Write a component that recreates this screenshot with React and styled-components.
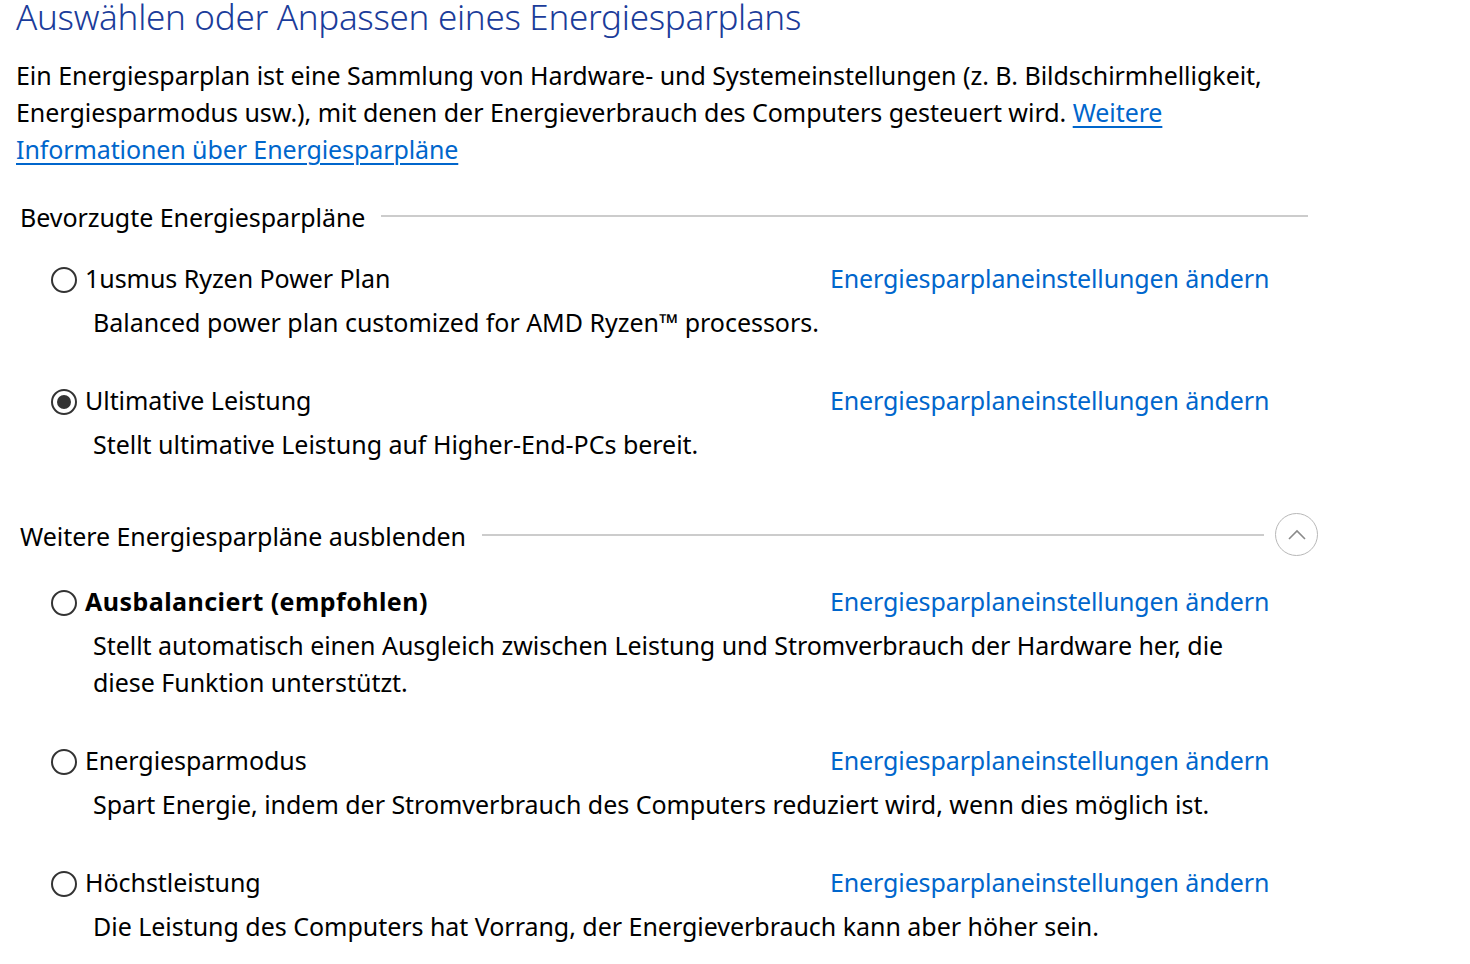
import React from "react";
import styled, { createGlobalStyle } from "styled-components";

const Global = createGlobalStyle`
  html, body { margin: 0; padding: 0; background: #ffffff; }
  body { font-family: "Noto Sans", "Open Sans", sans-serif; color: #000; overflow: hidden; }
`;

const Page = styled.div`
  padding-left: 16px;
  width: 1454px;
  box-sizing: border-box;
`;

const Title = styled.h1`
  margin: 0;
  font-size: 35px;
  line-height: 34px;
  font-weight: 300;
  color: #1b3c9a;
  letter-spacing: -0.3px;
`;

const Intro = styled.p`
  margin: 23px 0 0 0;
  width: 1270px;
  font-size: 25px;
  line-height: 37px;
  letter-spacing: -0.03px;
`;

const Link = styled.a`
  color: #0066cc;
  letter-spacing: ${p => (p.$underline ? "-0.1px" : "-0.12px")};
  text-decoration: ${p => (p.$underline ? "underline" : "none")};
  text-underline-offset: 4px;
  text-decoration-thickness: 1.5px;
  cursor: pointer;
`;

const GroupHeader = styled.div`
  display: flex;
  align-items: center;
  height: 43px;
  width: 1288px;
  margin: ${p => p.$top}px 0 0 4px;
`;

const GroupLabel = styled.span`
  font-size: 25px;
  line-height: 37px;
  letter-spacing: -0.05px;
  padding-top: 4px;
  white-space: nowrap;
`;

const Rule = styled.div`
  flex: 1;
  height: 2px;
  background: #cccccc;
  margin-left: 16px;
`;

const CollapseButton = styled.button`
  flex: none;
  width: 43px;
  height: 43px;
  margin: 0 -10px 0 11px;
  padding: 0;
  border-radius: 50%;
  border: 1px solid #b8b8b8;
  background: #fff;
  display: flex;
  align-items: center;
  justify-content: center;
`;

const PlanList = styled.div`
  display: flex;
  flex-direction: column;
  gap: 41px;
  padding-left: 35px;
  margin-top: ${p => p.$top}px;
`;

const Plan = styled.div`
  display: flex;
  flex-direction: column;
  gap: 7px;
`;

const PlanRow = styled.div`
  display: grid;
  grid-template-columns: 779px auto;
  align-items: center;
  font-size: 25px;
  line-height: 37px;
  letter-spacing: -0.05px;
`;

const RadioLabel = styled.label`
  display: flex;
  align-items: center;
  gap: 8px;
  font-weight: ${p => (p.$bold ? 700 : 400)};
  letter-spacing: ${p => (p.$bold ? "0.45px" : "-0.05px")};
`;

const Radio = styled.span`
  flex: none;
  width: 26px;
  height: 26px;
  box-sizing: border-box;
  border: 2px solid #333333;
  border-radius: 50%;
  display: flex;
  align-items: center;
  justify-content: center;
  margin-top: 2px;
  &::after {
    content: "";
    width: 14px;
    height: 14px;
    border-radius: 50%;
    background: #333333;
    display: ${p => (p.$checked ? "block" : "none")};
  }
`;

const PlanDesc = styled.div`
  padding-left: 42px;
  width: 1190px;
  box-sizing: border-box;
  font-size: 25px;
  line-height: 37px;
  letter-spacing: -0.03px;
`;

const preferred = [
  { name: "1usmus Ryzen Power Plan", desc: "Balanced power plan customized for AMD Ryzen™ processors." },
  { name: "Ultimative Leistung", desc: "Stellt ultimative Leistung auf Higher-End-PCs bereit.", checked: true },
];

const more = [
  { name: "Ausbalanciert (empfohlen)", bold: true, desc: "Stellt automatisch einen Ausgleich zwischen Leistung und Stromverbrauch der Hardware her, die diese Funktion unterstützt." },
  { name: "Energiesparmodus", desc: "Spart Energie, indem der Stromverbrauch des Computers reduziert wird, wenn dies möglich ist." },
  { name: "Höchstleistung", desc: "Die Leistung des Computers hat Vorrang, der Energieverbrauch kann aber höher sein." },
];

function PlanItem({ p }) {
  return (
    <Plan>
      <PlanRow>
        <RadioLabel $bold={p.bold}>
          <Radio $checked={p.checked} />
          <span>{p.name}</span>
        </RadioLabel>
        <Link>Energiesparplaneinstellungen ändern</Link>
      </PlanRow>
      <PlanDesc>{p.desc}</PlanDesc>
    </Plan>
  );
}

export default function App() {
  return (
    <Page>
      <Global />
      <Title>Auswählen oder Anpassen eines Energiesparplans</Title>
      <Intro>
        Ein Energiesparplan ist eine Sammlung von Hardware- und Systemeinstellungen (z. B. Bildschirmhelligkeit,
        Energiesparmodus usw.), mit denen der Energieverbrauch des Computers gesteuert wird.{" "}
        <Link $underline>Weitere Informationen über Energiesparpläne</Link>
      </Intro>

      <GroupHeader $top={26}>
        <GroupLabel>Bevorzugte Energiesparpläne</GroupLabel>
        <Rule />
      </GroupHeader>
      <PlanList $top={23}>
        {preferred.map(p => <PlanItem key={p.name} p={p} />)}
      </PlanList>

      <GroupHeader $top={50}>
        <GroupLabel>Weitere Energiesparpläne ausblenden</GroupLabel>
        <Rule />
        <CollapseButton aria-label="ausblenden">
          <svg width="20" height="12" viewBox="0 0 20 12">
            <path d="M2 10 L10 2 L18 10" fill="none" stroke="#8a8a8a" strokeWidth="1.6" />
          </svg>
        </CollapseButton>
      </GroupHeader>
      <PlanList $top={27}>
        {more.map(p => <PlanItem key={p.name} p={p} />)}
      </PlanList>
    </Page>
  );
}
